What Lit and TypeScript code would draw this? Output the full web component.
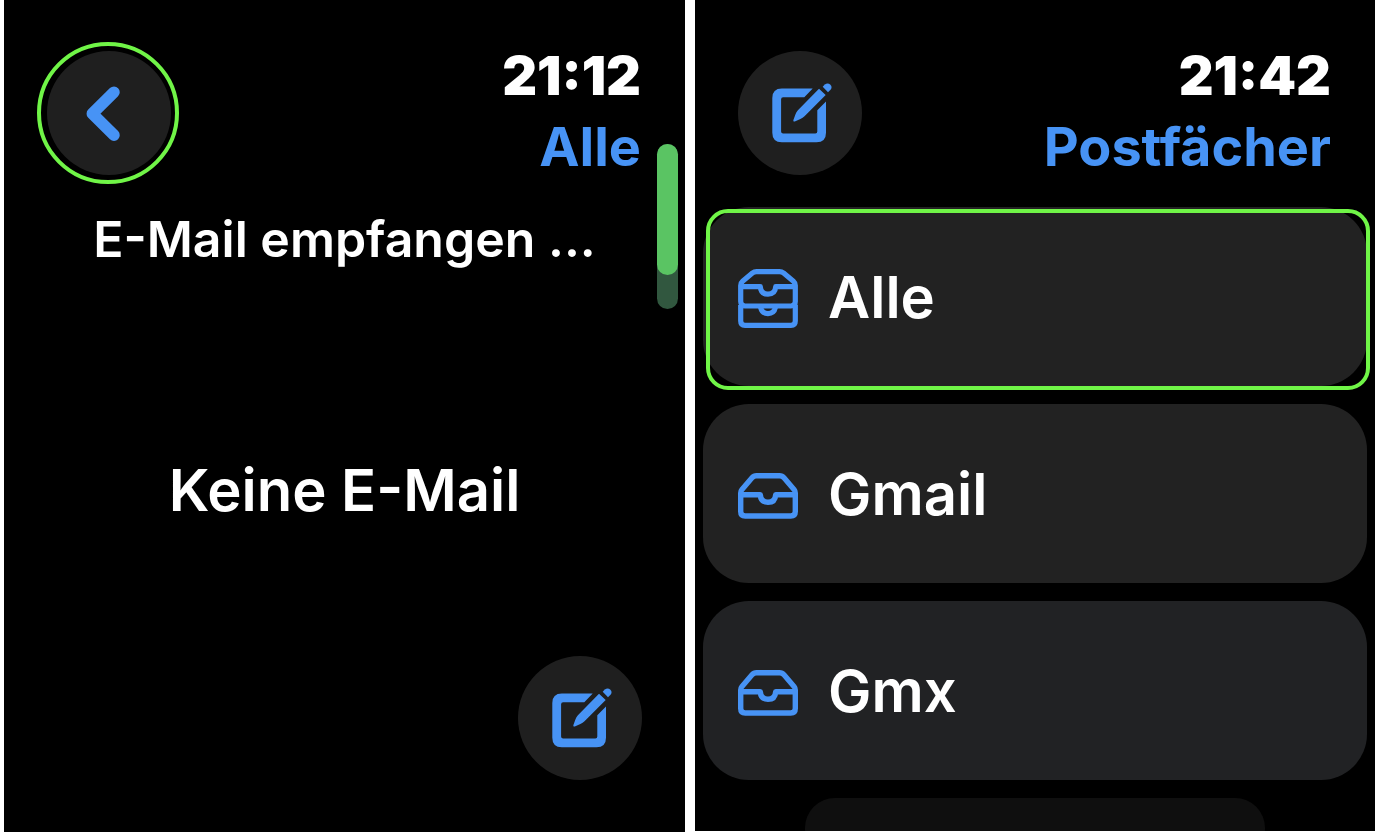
import { LitElement, html, css } from "lit";
import { customElement, property } from "lit/decorators.js";

const composeIcon = html`<svg class="icon" viewBox="0 0 124 124" aria-hidden="true">
  <path fill="currentColor" d="M74.7 37.5H43.8Q34.3 37.5 34.3 47V81.7Q34.3 91.2 43.8 91.2H78.5Q88 91.2 88 81.7V50.5L79.3 59.2V80.4Q79.3 82.4 77.3 82.4H45.1Q43.1 82.4 43.1 80.4V48.2Q43.1 46.2 45.1 46.2H66.3Z"/>
  <path fill="currentColor" d="M81 37.8L87.7 44L66.5 65.2Q64.8 66.9 62.4 67.9L56.8 70.4Q54.8 71 55.4 69L57.4 63.4Q58.2 61 59.9 59.2Z"/>
  <path fill="currentColor" d="M84.7 35.8L86.8 33.6Q89.8 31.2 92.4 33.8Q94.8 36.4 92.3 39L90 41.2Z"/>
</svg>`;

const backIcon = html`<svg class="icon" viewBox="0 0 124 124" aria-hidden="true">
  <path fill="none" stroke="currentColor" stroke-width="11.5" stroke-linecap="round" stroke-linejoin="round" d="M67 41.2L45.3 62.7L67 84.2"/>
</svg>`;

const trayIcon = html`<svg width="60" height="46" viewBox="0 0 60 46" aria-hidden="true">
  <g fill="none" stroke="currentColor" stroke-width="5.4" stroke-linejoin="round">
    <path d="M2.7 20Q2.7 18 4 16.4L13.8 5Q15.8 2.7 18.5 2.7H41.5Q44.2 2.7 46.2 5L56 16.4Q57.3 18 57.3 20V38.5Q57.3 43 52.8 43H7.2Q2.7 43 2.7 38.5Z"/>
    <path d="M2.7 21.7H22.3Q22.8 29.3 30 29.3T37.7 21.7H57.3"/>
  </g>
</svg>`;

const stackIcon = html`<svg width="60" height="59" viewBox="0 0 60 59" aria-hidden="true">
  <g fill="none" stroke="currentColor" stroke-width="5.2" stroke-linejoin="round">
    <path d="M2.7 16.5Q2.7 13.8 4.6 12.2L14.4 4Q16.2 2.6 18.5 2.6H41.5Q43.8 2.6 45.6 4L55.4 12.2Q57.3 13.8 57.3 16.5V32.6Q57.3 37 52.9 37H7.1Q2.7 37 2.7 32.6Z"/>
    <path d="M2.7 17.7H22.3Q22.8 25.2 30 25.2T37.7 17.7H57.3"/>
    <path d="M2.7 36V52Q2.7 56.3 7 56.3H53Q57.3 56.3 57.3 52V36"/>
    <path d="M22.6 38.5Q24 44.6 30 44.6T37.4 38.5"/>
  </g>
</svg>`;

const shared = css`
  * {
    box-sizing: border-box;
  }
  button {
    border: 0;
    margin: 0;
    padding: 0;
    font: inherit;
    color: inherit;
    cursor: pointer;
  }
  .round {
    position: relative;
    flex: none;
    width: 124px;
    height: 124px;
    border-radius: 50%;
    background: #1f1f1f;
    color: #4793f5;
  }
  .icon {
    display: block;
    width: 100%;
    height: 100%;
  }
`;

@customElement("watch-header")
class WatchHeader extends LitElement {
  @property() time = "";
  @property() heading = "";

  static styles = [
    shared,
    css`
      :host {
        display: flex;
        justify-content: space-between;
        align-items: flex-start;
        padding: 40px 44px 0 43px;
      }
      .action {
        margin-top: 11px;
      }
      .texts {
        text-align: right;
        font-size: 54px;
        line-height: 71px;
      }
      .time {
        font-weight: 900;
      }
      .heading {
        margin: 0;
        font-size: inherit;
        font-weight: 700;
        color: #4793f5;
      }
    `,
  ];

  render() {
    return html`<div class="action"><slot></slot></div>
      <div class="texts">
        <div class="time">${this.time}</div>
        <h1 class="heading">${this.heading}</h1>
      </div>`;
  }
}

@customElement("inbox-screen")
class InboxScreen extends LitElement {
  static styles = [
    shared,
    css`
      :host {
        position: relative;
        display: flex;
        flex-direction: column;
        background: #000;
        color: #fff;
      }
      .focused::after {
        content: "";
        position: absolute;
        inset: -9px -8px -9px -10px;
        border: 4px solid #70f547;
        border-radius: 50%;
      }
      .status {
        margin: 22px 0 0;
        font-size: 50px;
        font-weight: 600;
        line-height: 70px;
        text-align: center;
      }
      .empty {
        flex: 1;
        display: flex;
        align-items: center;
        justify-content: center;
        margin: 0;
        padding-top: 50px;
        font-size: 58px;
        font-weight: 600;
        line-height: 70px;
      }
      .footer {
        display: flex;
        justify-content: flex-end;
        padding: 0 43px 52px;
      }
      .track {
        position: absolute;
        top: 144px;
        right: 7px;
        width: 21px;
        height: 165px;
        border-radius: 11px;
        background: #31573f;
      }
      .thumb {
        height: 131px;
        border-radius: 11px;
        background: #5ac463;
      }
    `,
  ];

  render() {
    return html`<watch-header time="21:12" heading="Alle">
        <button class="round focused" aria-label="Zurück">${backIcon}</button>
      </watch-header>
      <p class="status">E-Mail empfangen ...</p>
      <p class="empty">Keine E-Mail</p>
      <div class="footer">
        <button class="round" aria-label="Neue E-Mail">${composeIcon}</button>
      </div>
      <div class="track"><div class="thumb"></div></div>`;
  }
}

@customElement("mailboxes-screen")
class MailboxesScreen extends LitElement {
  static styles = [
    shared,
    css`
      :host {
        display: flex;
        flex-direction: column;
        overflow: hidden;
        margin-bottom: 1px;
        background: #000;
        color: #fff;
      }
      .list {
        display: flex;
        flex-direction: column;
        gap: 18px;
        list-style: none;
        margin: 0;
        padding: 25px 8px 0;
      }
      .row {
        position: relative;
        display: flex;
        align-items: center;
        gap: 30px;
        width: 100%;
        height: 179px;
        padding: 4px 35px 0;
        border-radius: 46px;
        background: #222;
        text-align: left;
        font-size: 58px;
        font-weight: 600;
        line-height: 70px;
      }
      .row span {
        padding-bottom: 4px;
      }
      .row svg {
        flex: none;
        color: #4793f5;
      }
      .cool {
        background: #212224;
      }
      .focused::after {
        content: "";
        position: absolute;
        inset: 2px -3px -4px 3px;
        border: 4px solid #70f547;
        border-radius: 22px;
      }
      .next {
        width: 460px;
        max-width: 70%;
        height: 60px;
        align-self: center;
        border-radius: 32px;
        background: #0f0f0f;
      }
    `,
  ];

  render() {
    const boxes = [
      { name: "Alle", icon: stackIcon, style: "row focused" },
      { name: "Gmail", icon: trayIcon, style: "row" },
      { name: "Gmx", icon: trayIcon, style: "row cool" },
    ];
    return html`<watch-header time="21:42" heading="Postfächer">
        <button class="round" aria-label="Neue E-Mail">${composeIcon}</button>
      </watch-header>
      <ul class="list">
        ${boxes.map(
          (b) => html`<li><button class=${b.style}>${b.icon}<span>${b.name}</span></button></li>`
        )}
        <li class="next"></li>
      </ul>`;
  }
}

@customElement("app-root")
class AppRoot extends LitElement {
  static styles = css`
    :host {
      display: grid;
      grid-template-columns: 681fr 680fr;
      gap: 10px;
      height: 100vh;
      padding: 0 3px 0 4px;
      box-sizing: border-box;
      overflow: hidden;
      background: #fff;
      font-family: Inter, "Liberation Sans", sans-serif;
    }
  `;

  render() {
    return html`<inbox-screen></inbox-screen><mailboxes-screen></mailboxes-screen>`;
  }
}
